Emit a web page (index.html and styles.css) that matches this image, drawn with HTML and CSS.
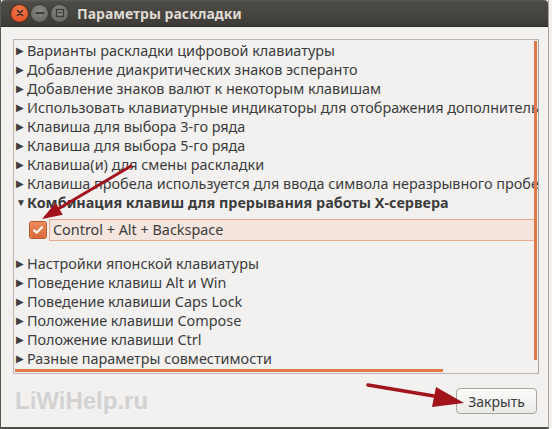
FILE: index.html
```html
<!DOCTYPE html>
<html lang="ru">
<head>
    <meta charset="UTF-8">
    <title>Параметры раскладки</title>
    <link rel="stylesheet" href="styles.css">
</head>
<body>
    <div class="window">
        <div class="titlebar">
            <div class="controls">
                <span class="ctl close">
                    <svg width="16" height="16" viewBox="0 0 16 16"><path d="M5.5 5.5l5 5M10.5 5.5l-5 5" stroke="#3a2a22" stroke-width="1.6" stroke-linecap="round"/></svg>
                </span>
                <span class="ctl">
                    <svg width="16" height="16" viewBox="0 0 16 16"><path d="M4.5 8h7" stroke="#3d3c38" stroke-width="1.8" stroke-linecap="round"/></svg>
                </span>
                <span class="ctl">
                    <svg width="16" height="16" viewBox="0 0 16 16"><rect x="4.5" y="4.5" width="7" height="7" fill="none" stroke="#3d3c38" stroke-width="1.3"/><path d="M6 7.5h4" stroke="#3d3c38" stroke-width="1"/></svg>
                </span>
            </div>
            <div class="title">Параметры раскладки</div>
        </div>

        <div class="content">
            <div class="tree">
                <div class="row"><span class="arrow">&#9654;</span>Варианты раскладки цифровой клавиатуры</div>
                <div class="row"><span class="arrow">&#9654;</span>Добавление диакритических знаков эсперанто</div>
                <div class="row"><span class="arrow">&#9654;</span>Добавление знаков валют к некоторым клавишам</div>
                <div class="row"><span class="arrow">&#9654;</span>Использовать клавиатурные индикаторы для отображения дополнительных раскладок</div>
                <div class="row"><span class="arrow">&#9654;</span>Клавиша для выбора 3-го ряда</div>
                <div class="row"><span class="arrow">&#9654;</span>Клавиша для выбора 5-го ряда</div>
                <div class="row"><span class="arrow">&#9654;</span>Клавиша(и) для смены раскладки</div>
                <div class="row"><span class="arrow">&#9654;</span>Клавиша пробела используется для ввода символа неразрывного пробела</div>
                <div class="row open"><span class="arrow down">&#9660;</span>Комбинация клавиш для прерывания работы X-сервера</div>
                <div class="child">
                    <span class="check">
                        <svg width="16" height="16" viewBox="0 0 16 16"><path d="M4 8.2l2.6 2.6L12 5.2" fill="none" stroke="#fff" stroke-width="2" stroke-linecap="round" stroke-linejoin="round"/></svg>
                    </span>
                    <span class="child-label">Control + Alt + Backspace</span>
                </div>
                <div class="row"><span class="arrow">&#9654;</span>Настройки японской клавиатуры</div>
                <div class="row"><span class="arrow">&#9654;</span>Поведение клавиш Alt и Win</div>
                <div class="row"><span class="arrow">&#9654;</span>Поведение клавиши Caps Lock</div>
                <div class="row"><span class="arrow">&#9654;</span>Положение клавиши Compose</div>
                <div class="row"><span class="arrow">&#9654;</span>Положение клавиши Ctrl</div>
                <div class="row"><span class="arrow">&#9654;</span>Разные параметры совместимости</div>

                <div class="vscroll"></div>
                <div class="hscroll"></div>
            </div>

            <div class="footer">
                <span class="watermark">LiWiHelp.ru</span>
                <button class="btn">Закрыть</button>
            </div>
        </div>

        <svg class="arrows" width="552" height="429" viewBox="0 0 552 429">
            <path d="M131 166 L58 209" stroke="#a3131b" stroke-width="3" stroke-linecap="round"/>
            <path d="M42 219 L55.6 202.8 L62.8 214.8 Z" fill="#a3131b"/>
            <path d="M368 385 L440 397" stroke="#a3131b" stroke-width="3.5" stroke-linecap="round"/>
            <path d="M464 403 L436 387 L432 407 Z" fill="#a3131b"/>
        </svg>
    </div>
</body>
</html>
```

FILE: styles.css
```css
:root {
    --bg: #f2f1f0;
    --text: #3c3c3c;
    --orange: #e0784a;
    --frame: #b9b6b1;
}

* {
    box-sizing: border-box;
}

body {
    margin: 0;
    width: 552px;
    height: 429px;
    overflow: hidden;
    background: #f2f1f0;
    font-family: "Noto Sans", "Open Sans", sans-serif;
    color: var(--text);
}

.window {
    position: relative;
    width: 549px;
    height: 429px;
    display: flex;
    flex-direction: column;
    background: var(--bg);
    border-left: 1px solid #5a5954;
    border-right: 1px solid #a8a5a0;
    border-bottom: 2px solid #4f4e4a;
}

.titlebar {
    height: 27px;
    flex: none;
    display: flex;
    align-items: center;
    gap: 9px;
    padding-left: 10px;
    background: linear-gradient(#5b5a55 0, #4c4b46 2px, #45443f 60%, #3c3b37 100%);
    border-bottom: 1px solid #2e2d2a;
    border-radius: 4px 4px 0 0;
}

.controls {
    display: flex;
    gap: 3px;
}

.ctl {
    width: 17px;
    height: 17px;
    border-radius: 50%;
    display: flex;
    align-items: center;
    justify-content: center;
    background: radial-gradient(circle at 50% 35%, #8a8984, #5f5e59);
    box-shadow: 0 0 0 1px #3a3935;
}

.ctl.close {
    background: radial-gradient(circle at 50% 35%, #f57c4e, #d9461d);
    box-shadow: 0 0 0 1px #4a2a1c;
}

.title {
    font-weight: 700;
    font-size: 14px;
    color: #dfdbd2;
}

.content {
    flex: 1;
    display: flex;
    flex-direction: column;
    padding: 12px 9px 0 12px;
}

.tree {
    position: relative;
    height: 335px;
    border: 1px solid var(--frame);
    border-right-color: #a9a6a1;
    padding: 1px 4px 0 2px;
    overflow: hidden;
    font-size: 14.4px;
}

.row {
    height: 19px;
    line-height: 19px;
    white-space: nowrap;
    display: flex;
    align-items: center;
}

.arrow {
    width: 11px;
    flex: none;
    font-size: 10px;
    color: #3f3f3f;
}

.row.open {
    font-weight: 700;
}

.arrow.down {
    font-size: 10px;
}

.child {
    height: 42px;
    display: flex;
    align-items: flex-start;
    padding: 7px 0 0 14px;
    gap: 3px;
}

.check {
    width: 16px;
    height: 16px;
    margin-top: 3px;
    border-radius: 2px;
    background: linear-gradient(#ec8a5c, #d86a3a);
    box-shadow: 0 0 0 1px #b85a30;
    display: flex;
}

.child-label {
    flex: 1;
    height: 22px;
    line-height: 20px;
    padding-left: 3px;
    background: #f5e5df;
    border: 1px solid #e7ab92;
    border-right: none;
    white-space: nowrap;
}

.vscroll {
    position: absolute;
    top: 1px;
    right: 1px;
    width: 3px;
    height: 319px;
    background: var(--orange);
}

.hscroll {
    position: absolute;
    left: 1px;
    bottom: 1px;
    width: 428px;
    height: 3px;
    background: var(--orange);
}

.footer {
    display: flex;
    justify-content: space-between;
    align-items: center;
    margin-top: 13px;
    padding-left: 2px;
}

.watermark {
    font-family: "Liberation Sans", Arial, sans-serif;
    font-weight: 700;
    font-size: 24px;
    color: #d3d2d0;
}

.btn {
    width: 81px;
    height: 26px;
    margin-right: 2px;
    font-family: "Noto Sans", "Open Sans", sans-serif;
    font-size: 14px;
    color: var(--text);
    background: linear-gradient(#fbfbfa, #ebeae8);
    border: 1px solid #a9a6a1;
    border-radius: 4px;
    padding: 0;
}

.arrows {
    position: absolute;
    top: 0;
    left: -1px;
    pointer-events: none;
}
```
